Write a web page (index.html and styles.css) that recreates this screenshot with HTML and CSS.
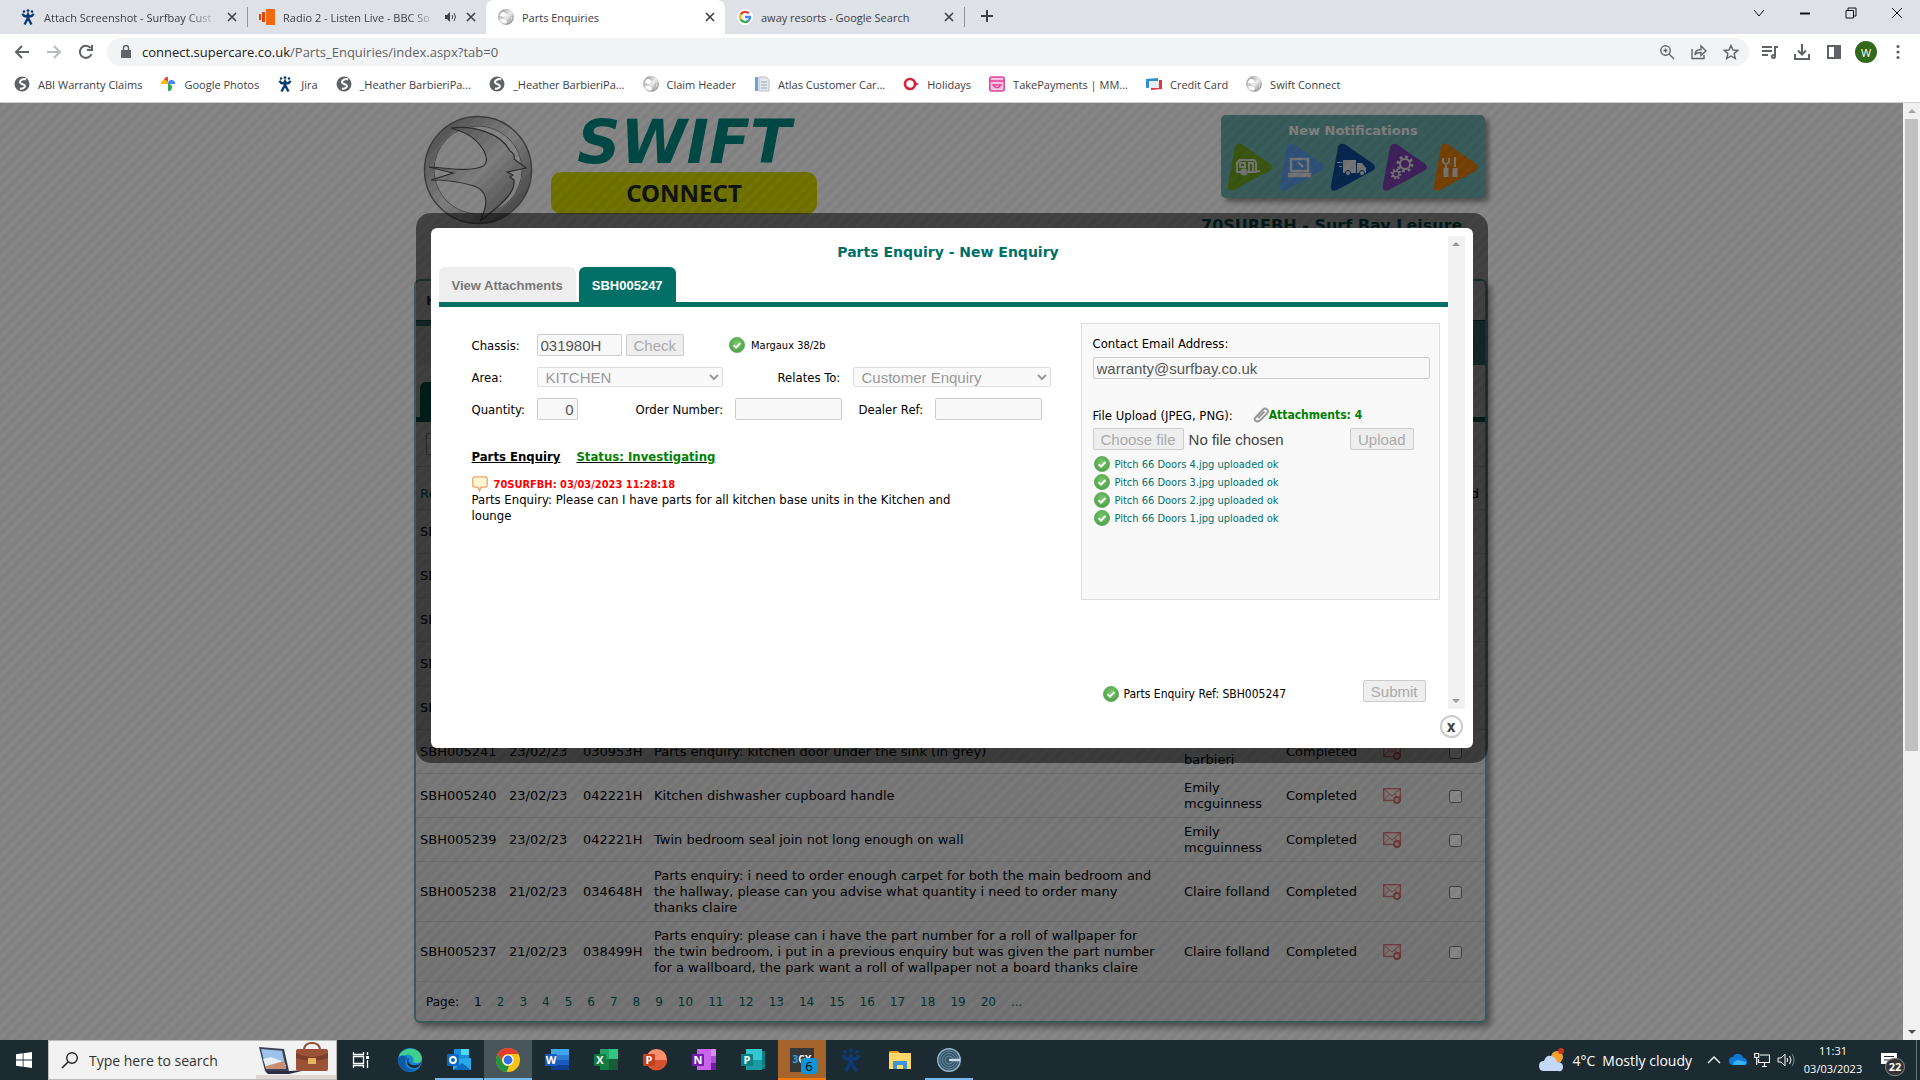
FILE: index.html
```html
<!DOCTYPE html>
<html lang="en">
<head>
  <meta charset="UTF-8" />
  <meta name="viewport" content="width=device-width, initial-scale=1" />
  <title>Parts Enquiries</title>
  <link rel="stylesheet" href="styles.css">
</head>
<body>

<!-- shared symbols -->
<svg class="defs" width="0" height="0">
  <defs>
    <linearGradient id="silver" x1="0" y1="0" x2="1" y2="1">
      <stop offset="0" stop-color="#8e8e8e" /><stop offset=".5" stop-color="#f2f2f2" /><stop offset="1" stop-color="#777" />
    </linearGradient>
    <radialGradient id="green" cx=".5" cy=".4" r=".6">
      <stop offset="0" stop-color="#7cc96e" /><stop offset="1" stop-color="#4ba046" />
    </radialGradient>
    <symbol id="tick" viewBox="0 0 16 16">
      <circle cx="8" cy="8" r="7.6" fill="url(#green)" stroke="#5fa85a" stroke-width=".8" />
      <path d="M4.6 8.2l2.4 2.4 4.4-4.6" fill="none" stroke="#fff" stroke-width="2" />
    </symbol>
    <symbol id="swift" viewBox="0 0 110 110">
      <circle cx="55" cy="55" r="49" fill="none" stroke="url(#silver)" stroke-width="9" />
      <circle cx="55" cy="55" r="53.5" fill="none" stroke="#777" stroke-width="1.5" />
      <circle cx="55" cy="55" r="44" fill="none" stroke="#888" stroke-width="1" />
      <path d="M28 13C50 10 78 18 87 36c4 2 5 6 4 8l12 9-19 4 6 3-3 2 4 3c2 14-17 28-34 41 9-18 8-30-6-35-13-4-28-6-43-6l22-7-24-6c20 1 38 5 52 0 6-2 7-8 3-16C54 24 45 18 28 13z" fill="url(#silver)" stroke="#555" stroke-width="1.2" />
    </symbol>
    <symbol id="globe" viewBox="0 0 16 16">
      <circle cx="8" cy="8" r="7.5" fill="#5f6368" />
      <path d="M12 3.500C10 2.500 6 3.500 6 6s5 2 5 4-3 3-5 2.500" fill="none" stroke="#fff" stroke-width="2" />
    </symbol>
    <symbol id="jira" viewBox="0 0 16 16">
      <g fill="#0c3a73"><circle cx="4" cy="2.5" r="1.3" /><circle cx="8" cy="1.6" r="1.4" /><circle cx="12" cy="2.5" r="1.3" /></g>
      <path d="M2.5 4.8C4 8 7 8 8 5.500c1 2.500 4 2.500 5.500-.7M7.500 8l4 7.500M8.500 8l-4 7.500" fill="none" stroke="#0c3a73" stroke-width="2.400" />
    </symbol>
    <symbol id="mail" viewBox="0 0 18 16">
      <rect x=".7" y=".7" width="16.600" height="11.800" fill="#f7dada" stroke="#c43c44" stroke-width="1.400" />
      <path d="M1 1l8 7 8-7M1 12l5-6M17 12l-5-6" fill="none" stroke="#c43c44" />
      <circle cx="14" cy="12" r="3" fill="#f4c8c8" stroke="#b5252e" stroke-width="1.800" />
    </symbol>
    <symbol id="cross" viewBox="0 0 12 12"><path d="M2 2l8 8M10 2l-8 8" fill="none" stroke="#3c4043" stroke-width="1.600" /></symbol>
  </defs>
</svg>

<header class="browser">
  <div class="tab-strip">
    <div class="tab">
      <svg class="ico"><use href="#jira" /></svg>
      <span class="tab-title fade">Attach Screenshot - Surfbay Cust</span>
      <svg class="close"><use href="#cross" /></svg>
    </div>
    <div class="tab divided">
      <svg class="ico" viewBox="0 0 16 16"><path d="M0 5h2v6H0zM3 3h3v10H3z" fill="#e0450c" /><path d="M7 0h9v16H7z" fill="#f26a10" /></svg>
      <span class="tab-title fade">Radio 2 - Listen Live - BBC So</span>
      <svg class="close" viewBox="0 0 12 12"><path d="M0 4h2l3-3v10L2 8H0z" fill="#3c4043" /><path d="M7 4q1.500 2 0 4M9 2q3 4 0 8" fill="none" stroke="#3c4043" /></svg>
      <svg class="close"><use href="#cross" /></svg>
    </div>
    <div class="tab active">
      <svg class="ico"><use href="#swift" /></svg>
      <span class="tab-title">Parts Enquiries</span>
      <svg class="close"><use href="#cross" /></svg>
    </div>
    <div class="tab">
      <svg class="ico" viewBox="0 0 16 16"><circle cx="8" cy="8" r="8" fill="#fff" /><g fill="none" stroke-width="2.400"><path d="M11.800 4.400A5 5 0 0 0 3.700 5.600" stroke="#ea4335" /><path d="M3.700 5.600a5 5 0 0 0 0 4.800" stroke="#fbbc05" /><path d="M3.700 10.400a5 5 0 0 0 7.800 1.200" stroke="#34a853" /><path d="M11.500 11.600A5 5 0 0 0 13 8H8" stroke="#4285f4" /></g></svg>
      <span class="tab-title">away resorts - Google Search</span>
      <svg class="close"><use href="#cross" /></svg>
    </div>
    <button class="new-tab" aria-label="New tab"><svg width="14" height="14" viewBox="0 0 14 14"><path d="M7 1v12M1 7h12" stroke="#3c4043" stroke-width="2" /></svg></button>
    <div class="window-controls">
      <button aria-label="Search tabs"><svg width="12" height="12" viewBox="0 0 12 12"><path d="M1 3l5 6 5-6" /></svg></button>
      <button aria-label="Minimise"><svg width="12" height="12" viewBox="0 0 12 12"><path d="M1 6.500h10" stroke-width="2" /></svg></button>
      <button aria-label="Restore"><svg width="12" height="12" viewBox="0 0 12 12"><path d="M1 3.500h7.500V11H1zM3 3V1h8v8H9" /></svg></button>
      <button aria-label="Close"><svg width="12" height="12" viewBox="0 0 12 12"><path d="M1 1l10 10M11 1L1 11" /></svg></button>
    </div>
  </div>

  <div class="toolbar">
    <button aria-label="Back"><svg width="16" height="16" viewBox="0 0 16 16"><path d="M15 8H2M8 2L2 8l6 6" /></svg></button>
    <button aria-label="Forward" class="off"><svg width="16" height="16" viewBox="0 0 16 16"><path d="M1 8h13M8 2l6 6-6 6" /></svg></button>
    <button aria-label="Reload"><svg width="16" height="16" viewBox="0 0 16 16"><path d="M13.500 10A6 6 0 1 1 12.500 4M14 1v5H9" /></svg></button>
    <div class="address">
      <svg width="12" height="14" viewBox="0 0 12 14"><path d="M1 5h10v8H1z" fill="#5f6368" /><path d="M3.500 5V3a2.500 2.500 0 0 1 5 0v2" fill="none" stroke="#5f6368" stroke-width="1.500" /></svg>
      <span class="url"><b>connect.supercare.co.uk</b>/Parts_Enquiries/index.aspx?tab=0</span>
      <button aria-label="Zoom"><svg width="16" height="16" viewBox="0 0 16 16"><circle cx="6.500" cy="6.500" r="4.700" /><path d="M10 10l5 5M6.500 4.500v4M4.500 6.500h4" /></svg></button>
      <button aria-label="Share"><svg width="16" height="16" viewBox="0 0 16 16"><path d="M1 5v9.500h12V11M4 11c0-4 3-5.500 6-5.500V2l5 5-5 4.500V8.500C7 8.500 5 9 4 11z" /></svg></button>
      <button aria-label="Bookmark"><svg width="16" height="16" viewBox="0 0 16 16"><path d="M8 1.500l2 4.500 4.800.4-3.700 3.200 1.200 4.900L8 12l-4.300 2.500 1.200-4.900L1.200 6.400 6 6z" /></svg></button>
    </div>
    <button aria-label="Media"><svg width="16" height="16" viewBox="0 0 16 16"><path d="M0 3h10M0 7h10M0 11h6M13 12V3h3" /><circle cx="11.500" cy="12.500" r="1.500" /></svg></button>
    <button aria-label="Downloads"><svg width="16" height="16" viewBox="0 0 16 16"><path d="M8 0v10M4 6.500l4 4 4-4M1 10v5h14v-5" /></svg></button>
    <button aria-label="Side panel"><svg width="16" height="16" viewBox="0 0 16 16"><path d="M2 2h12v12H2z" /><path d="M9 2h5v12H9z" fill="#5f6368" /></svg></button>
    <button aria-label="Profile" class="avatar">W</button>
    <button aria-label="Menu"><svg width="16" height="16" viewBox="0 0 16 16"><g fill="#5f6368" stroke="none"><circle cx="8" cy="2.500" r="1.600" /><circle cx="8" cy="8" r="1.600" /><circle cx="8" cy="13.500" r="1.600" /></g></svg></button>
  </div>

  <nav class="bookmarks">
    <a href="#"><svg class="ico"><use href="#globe" /></svg>ABI Warranty Claims</a>
    <a href="#"><svg class="ico" viewBox="0 0 16 16"><path d="M8 8V1a3.500 3.500 0 0 0-1 7z" fill="#ea4335" /><path d="M8 8h7a3.500 3.500 0 0 0-7-1z" fill="#4285f4" /><path d="M8 8v7a3.500 3.500 0 0 0 1-7z" fill="#34a853" /><path d="M8 8H1a3.500 3.500 0 0 1 7-1z" fill="#fbbc04" /></svg>Google Photos</a>
    <a href="#"><svg class="ico"><use href="#jira" /></svg>Jira</a>
    <a href="#"><svg class="ico"><use href="#globe" /></svg>_Heather BarbieriPa...</a>
    <a href="#"><svg class="ico"><use href="#globe" /></svg>_Heather BarbieriPa...</a>
    <a href="#"><svg class="ico"><use href="#swift" /></svg>Claim Header</a>
    <a href="#"><svg class="ico" viewBox="0 0 16 16"><path d="M1 1h3v14H1z" fill="#6aa3d0" /><path d="M5 1h7l3 3v11H5z" fill="#e4e9ed" stroke="#b4bcc4" /><path d="M7 6h6M7 9h6M7 12h6" stroke="#9aa6b0" /></svg>Atlas Customer Car...</a>
    <a href="#"><svg class="ico" viewBox="0 0 16 16"><circle cx="7" cy="8" r="5" fill="none" stroke="#d0253c" stroke-width="2.600" /><path d="M12 6l4 2-4 2z" fill="#d0253c" /></svg>Holidays</a>
    <a href="#"><svg class="ico" viewBox="0 0 16 16"><rect x=".8" y="1" width="14.400" height="14" rx="2" fill="#f9c4e2" stroke="#e0409a" stroke-width="1.500" /><path d="M1 5h14M4 9q4 5 8 0z" fill="#fff" stroke="#e0409a" stroke-width="1.400" /></svg>TakePayments | MM...</a>
    <a href="#"><svg class="ico" viewBox="0 0 16 16"><path d="M0 3l12-1v9L0 12z" fill="#2f8fd0" /><path d="M3 5h10v7H3z" fill="#e8eef4" /><path d="M13 4h3v9L5 14v-2h8z" fill="#e0383c" /></svg>Credit Card</a>
    <a href="#"><svg class="ico"><use href="#swift" /></svg>Swift Connect</a>
  </nav>
</header>

<main class="viewport">
  <div class="page">
    <div class="site">
      <div class="site-header">
        <svg class="badge"><use href="#swift" /></svg>
        <div class="brand">
          <div class="brand-name">SWIFT</div>
          <div class="brand-sub">CONNECT</div>
        </div>
        <div class="account">
          <div class="notifications">
            <h3>New Notifications</h3>
            <div class="arrows">
              <svg viewBox="0 0 48 50"><path d="M9 4c1-4 5-4 8-2l26 18c4 3 4 6 0 8L8 47c-4 2-7 0-6-5z" fill="#6ea51f" /><g fill="none" stroke="#ddd" stroke-width="2"><path d="M11 28V21q0-4 5-4h11q3 0 3 4v8H11zM14 20h5v4h-5zM23 29v-9h4v9M30 28h4" /><circle cx="18" cy="29" r="2.500" fill="#ddd" /></g></svg>
              <svg viewBox="0 0 48 50"><path d="M9 4c1-4 5-4 8-2l26 18c4 3 4 6 0 8L8 47c-4 2-7 0-6-5z" fill="#5b9be6" /><path d="M13 16h17v12H13zM11 31h21v2H11zM20 19l5 5" fill="none" stroke="#ddd" stroke-width="2.400" /></svg>
              <svg viewBox="0 0 48 50"><path d="M9 4c1-4 5-4 8-2l26 18c4 3 4 6 0 8L8 47c-4 2-7 0-6-5z" fill="#0b4a94" /><path d="M14 17h13v13H14zM28 20h5l4 5v5h-9zM8 19h5v1H8zM10 23h3v1h-3z" fill="#ddd" /><g fill="#ddd" stroke="#0b4a94"><circle cx="19" cy="30" r="2.500" /><circle cx="33" cy="30" r="2.500" /></g></svg>
              <svg viewBox="0 0 48 50"><path d="M9 4c1-4 5-4 8-2l26 18c4 3 4 6 0 8L8 47c-4 2-7 0-6-5z" fill="#7a3fae" /><g fill="none" stroke="#ddd"><circle cx="24" cy="21" r="5" stroke-width="2" /><circle cx="24" cy="21" r="7" stroke-width="3" stroke-dasharray="2.700 2.800" /><circle cx="15" cy="31" r="3" stroke-width="1.500" /><circle cx="15" cy="31" r="4.500" stroke-width="2" stroke-dasharray="1.800 1.700" /></g></svg>
              <svg viewBox="0 0 48 50"><path d="M9 4c1-4 5-4 8-2l26 18c4 3 4 6 0 8L8 47c-4 2-7 0-6-5z" fill="#e07b05" /><g stroke="#ddd" fill="none"><path d="M11 15v4q3 4 6 0v-4M14 21v4M23 14v10" stroke-width="2" /><path d="M14 25v9M23 25v9" stroke-width="5" /></g></svg>
            </div>
          </div>
          <h2>70SURFBH - Surf Bay Leisure</h2>
        </div>
      </div>

      <div class="panel">
        <div class="menu"><a href="#">Home</a></div>
        <div class="band"></div>
        <div class="sub-tabs"><span class="sub-tab"></span></div>
        <div class="filter"><input type="text" aria-label="Filter" /></div>
        <table class="enquiries">
          <colgroup><col class="c-ref"><col class="c-date"><col class="c-chassis"><col><col class="c-name"><col class="c-status"><col class="c-mail"><col class="c-check"></colgroup>
          <thead>
            <tr><th><a href="#">Ref</a></th><th></th><th></th><th></th><th></th><th></th><th colspan="2" class="end">Selected</th></tr>
          </thead>
          <tbody>
            <tr><td>SBH005246</td><td></td><td></td><td></td><td></td><td></td><td></td><td></td></tr>
            <tr><td>SBH005245</td><td></td><td></td><td></td><td></td><td></td><td></td><td></td></tr>
            <tr><td>SBH005244</td><td></td><td></td><td></td><td></td><td></td><td></td><td></td></tr>
            <tr><td>SBH005243</td><td></td><td></td><td></td><td></td><td></td><td></td><td></td></tr>
            <tr><td>SBH005242</td><td></td><td></td><td></td><td></td><td></td><td></td><td></td></tr>
            <tr><td>SBH005241</td><td>23/02/23</td><td>030953H</td><td class="desc">Parts enquiry: kitchen door under the sink (in grey)</td><td>Heather barbieri</td><td>Completed</td><td><svg class="mail"><use href="#mail" /></svg></td><td><input type="checkbox" aria-label="Select SBH005241"></td></tr>
            <tr><td>SBH005240</td><td>23/02/23</td><td>042221H</td><td class="desc">Kitchen dishwasher cupboard handle</td><td>Emily mcguinness</td><td>Completed</td><td><svg class="mail"><use href="#mail" /></svg></td><td><input type="checkbox" aria-label="Select SBH005240"></td></tr>
            <tr><td>SBH005239</td><td>23/02/23</td><td>042221H</td><td class="desc">Twin bedroom seal join not long enough on wall</td><td>Emily mcguinness</td><td>Completed</td><td><svg class="mail"><use href="#mail" /></svg></td><td><input type="checkbox" aria-label="Select SBH005239"></td></tr>
            <tr><td>SBH005238</td><td>21/02/23</td><td>034648H</td><td class="desc">Parts enquiry: i need to order enough carpet for both the main bedroom and the hallway, please can you advise what quantity i need to order many thanks claire</td><td>Claire folland</td><td>Completed</td><td><svg class="mail"><use href="#mail" /></svg></td><td><input type="checkbox" aria-label="Select SBH005238"></td></tr>
            <tr><td>SBH005237</td><td>21/02/23</td><td>038499H</td><td class="desc">Parts enquiry: please can i have the part number for a roll of wallpaper for the twin bedroom, i put in a previous enquiry but was given the part number for a wallboard, the park want a roll of wallpaper not a board thanks claire</td><td>Claire folland</td><td>Completed</td><td><svg class="mail"><use href="#mail" /></svg></td><td><input type="checkbox" aria-label="Select SBH005237"></td></tr>
          </tbody>
        </table>
        <div class="pager">
          <span>Page:</span><span>1</span>
          <a href="#">2</a><a href="#">3</a><a href="#">4</a><a href="#">5</a><a href="#">6</a><a href="#">7</a><a href="#">8</a><a href="#">9</a><a href="#">10</a><a href="#">11</a><a href="#">12</a><a href="#">13</a><a href="#">14</a><a href="#">15</a><a href="#">16</a><a href="#">17</a><a href="#">18</a><a href="#">19</a><a href="#">20</a><a href="#">...</a>
        </div>
      </div>

      <div class="lower"><div></div><div></div><div></div></div>
    </div>

    <div class="overlay">
      <div class="modal">
        <div class="modal-body">
          <div class="modal-scroll">
            <div class="modal-content">
              <h1>Parts Enquiry - New Enquiry</h1>
              <div class="modal-tabs">
                <a href="#">View Attachments</a>
                <a href="#" class="current">SBH005247</a>
              </div>
              <div class="modal-cols">
                <form class="details">
                  <div class="row">
                    <label for="chassis">Chassis:</label>
                    <input type="text" id="chassis" class="w-chassis" value="031980H" readonly />
                    <button type="button" class="btn check" disabled>Check</button>
                    <span class="note model"><svg class="ico"><use href="#tick" /></svg>Margaux 38/2b</span>
                  </div>
                  <div class="row">
                    <label for="area">Area:</label>
                    <select id="area" class="w-area" disabled><option>KITCHEN</option></select>
                    <label for="relates" class="l-relates">Relates To:</label>
                    <select id="relates" class="w-relates" disabled><option>Customer Enquiry</option></select>
                  </div>
                  <div class="row">
                    <label for="qty">Quantity:</label>
                    <input type="text" id="qty" class="w-qty" value="0" readonly />
                    <label for="order" class="l-order">Order Number:</label>
                    <input type="text" id="order" class="w-order" readonly />
                    <label for="dealer" class="l-dealer">Dealer Ref:</label>
                    <input type="text" id="dealer" class="w-order" readonly />
                  </div>
                  <div class="headings"><span>Parts Enquiry</span><span class="status">Status: Investigating</span></div>
                  <div class="comment-head">
                    <svg class="ico" viewBox="0 0 16 16"><path d="M3 .8h10q2.200 0 2.200 2.200v6q0 2.200-2.200 2.200H9L7.500 15 6 11.200H3Q.8 11.200.8 9V3Q.8.8 3 .8z" fill="#fff6d2" stroke="#eda56e" stroke-width="1.300" /></svg>
                    70SURFBH: 03/03/2023 11:28:18
                  </div>
                  <p class="comment">Parts Enquiry: Please can I have parts for all kitchen base units in the Kitchen and lounge</p>
                </form>

                <div class="side">
                  <div class="upload-box">
                    <label for="email">Contact Email Address:</label>
                    <input type="text" id="email" value="warranty@surfbay.co.uk" readonly />
                    <div class="upload-head">
                      <span>File Upload (JPEG, PNG):</span>
                      <span class="attachments"><svg class="ico" viewBox="0 0 16 16"><path d="M2 11L10 2.500q2-2 4 0t0 4L7 13.500q-2 1.500-4 .5t-1-3.500M5 11l6.500-6.500" fill="none" stroke="#999" stroke-width="2" /></svg>Attachments: 4</span>
                    </div>
                    <div class="upload-row">
                      <button class="btn" disabled>Choose file</button>
                      <span class="chosen">No file chosen</span>
                      <button class="btn upload" disabled>Upload</button>
                    </div>
                    <ul class="files">
                      <li><svg class="ico"><use href="#tick" /></svg>Pitch 66 Doors 4.jpg uploaded ok</li>
                      <li><svg class="ico"><use href="#tick" /></svg>Pitch 66 Doors 3.jpg uploaded ok</li>
                      <li><svg class="ico"><use href="#tick" /></svg>Pitch 66 Doors 2.jpg uploaded ok</li>
                      <li><svg class="ico"><use href="#tick" /></svg>Pitch 66 Doors 1.jpg uploaded ok</li>
                    </ul>
                  </div>
                  <div class="submit-row">
                    <span class="note"><svg class="ico"><use href="#tick" /></svg>Parts Enquiry Ref: SBH005247</span>
                    <button class="btn" disabled>Submit</button>
                  </div>
                </div>
              </div>
            </div>
            <div class="mini-bar"><i class="up"></i><i class="down"></i></div>
          </div>
          <button class="modal-close" aria-label="Close">x</button>
        </div>
      </div>
    </div>
  </div>
  <div class="scrollbar"><i class="up"></i><span class="thumb"></span><i class="down"></i></div>
</main>

<footer class="taskbar">
  <button class="start" aria-label="Start"><svg width="16" height="16" viewBox="0 0 16 16"><path d="M0 2.300L6.700 1.300v6.300H0zM7.500 1.200L16 0v7.600H7.500zM0 8.400h6.700v6.300L0 13.700zM7.500 8.400H16V16l-8.500-1.200z" fill="#fff" /></svg></button>
  <div class="search">
    <svg width="18" height="18" viewBox="0 0 18 18"><circle cx="11" cy="7" r="5.300" fill="none" stroke="#222" stroke-width="1.400" /><path d="M7 11l-6 6" stroke="#222" stroke-width="1.600" /></svg>
    <input type="text" placeholder="Type here to search" aria-label="Search" />
    <svg width="80" height="38" viewBox="0 0 80 38"><path d="M0 34h80v4H0z" fill="#ddd6d2" /><path d="M3 6l25 2 5 22H9z" fill="#3b3f56" /><path d="M5 8l21 1.700 4 18.300H10z" fill="#9ec3ea" /><path d="M7 18l8-2 13 5 2 4-20 1z" fill="#e8eef5" /><path d="M10 25l18-5 2 8H10z" fill="#c98e76" /><path d="M9 30h24l17-1-17 4H12z" fill="#2d3044" /><path d="M48 8q1-6 8-6t8 6" fill="none" stroke="#8a4b32" stroke-width="2" /><rect x="40" y="8" width="32" height="22" rx="2" fill="#9a5238" /><path d="M40 12q16 8 32 0v5q-16 5-32 0z" fill="#7d3d28" /><rect x="52" y="17" width="8" height="6" fill="#e8b45c" /></svg>
  </div>
  <div class="apps">
    <button aria-label="Task view"><svg viewBox="0 0 24 24"><g fill="none" stroke="#fff" stroke-width="1.300"><path d="M4.500 8.500h10v7h-10zM4.500 4v2.500h10V4M4.500 20v-2.500h10V20M18.500 4v3M18.500 12v8" /></g><path d="M17 8h3v3h-3z" fill="#fff" /></svg></button>
    <button aria-label="Edge"><svg viewBox="0 0 24 24"><circle cx="12" cy="12" r="12" fill="#1787d6" /><path d="M1 8C5-2 22-2 24 10c0 5-6 6-9 4 2-5-3-8-7-7s-6 2-7 1z" fill="#3fd08c" /><path d="M9 10c-4 4 0 14 10 11-8 6-19 0-19-9 1-5 6-6 9-2z" fill="#0c59a4" /><path d="M11 10q-2 3 1 6 5 3 11-1-2 5-7 5-7-1-7-7 0-3 2-3z" fill="#1b2b31" /></svg></button>
    <button aria-label="Outlook" class="running"><svg viewBox="0 0 24 24"><path d="M7 1h15v12H7z" fill="#1490df" /><path d="M14 1h8v6h-8z" fill="#50d9ff" /><path d="M6 11l18-1v12H6z" fill="#28a8ea" /><path d="M6 22l9-7 9 7z" fill="#0f6cbd" /><rect y="6" width="12" height="12" rx="1" fill="#0b68c4" /><circle cx="6" cy="12" r="3" fill="none" stroke="#fff" stroke-width="1.800" /></svg></button>
    <button aria-label="Chrome" class="running front"><svg viewBox="0 0 24 24"><circle cx="12" cy="12" r="12" fill="#fbc116" /><path d="M1.600 6A12 12 0 0 1 22.400 6H12a6 6 0 0 0-5.200 9z" fill="#e33b2e" /><path d="M1.600 6l5.200 9a6 6 0 0 0 6.200 3l-2.500 6A12 12 0 0 1 1.600 6z" fill="#229342" /><circle cx="12" cy="12" r="5.600" fill="#fff" /><circle cx="12" cy="12" r="4.400" fill="#2f6fe4" /></svg></button>
    <button aria-label="Word"><svg viewBox="0 0 24 24"><path d="M6 1h18v6H6z" fill="#41a5ee" /><path d="M6 7h18v5H6z" fill="#2b7cd3" /><path d="M6 12h18v5H6z" fill="#185abd" /><path d="M6 17h18v5H6z" fill="#103f91" /><rect y="6" width="12" height="12" rx="1" fill="#185abd" /><text x="6" y="16">W</text></svg></button>
    <button aria-label="Excel"><svg viewBox="0 0 24 24"><path d="M6 1h9v10H6z" fill="#21a366" /><path d="M15 1h9v10h-9z" fill="#33c481" /><path d="M6 11h9v11H6z" fill="#107c41" /><path d="M15 11h9v11h-9z" fill="#185c37" /><rect y="6" width="12" height="12" rx="1" fill="#107c41" /><text x="6" y="16">X</text></svg></button>
    <button aria-label="PowerPoint"><svg viewBox="0 0 24 24"><circle cx="13.500" cy="11.500" r="10.500" fill="#ff8f6b" /><path d="M3 12h21a10.500 10.500 0 0 1-21 0z" fill="#d35230" /><rect y="6" width="12" height="12" rx="1" fill="#c43e1c" /><text x="6" y="16">P</text></svg></button>
    <button aria-label="OneNote"><svg viewBox="0 0 24 24"><path d="M5 1h14v21H5z" fill="#ca64ea" /><path d="M19 1h5v7h-5z" fill="#d88cf0" /><path d="M19 8h5v7h-5z" fill="#ae4bd5" /><path d="M19 15h5v7h-5z" fill="#7719aa" /><rect y="6" width="12" height="12" rx="1" fill="#7719aa" /><text x="6" y="16">N</text></svg></button>
    <button aria-label="Publisher"><svg viewBox="0 0 24 24"><path d="M20 3h4v18h-4z" fill="#038387" /><path d="M5 1h16v11H5z" fill="#37c6d0" /><path d="M5 12h16v10H5z" fill="#1a9ba1" /><rect y="6" width="12" height="12" rx="1" fill="#038387" /><text x="6" y="16">P</text></svg></button>
    <button aria-label="3CX" class="alert"><svg viewBox="0 0 24 24"><path d="M0 0h24v24H0z" fill="#373737" /><text x="12" y="15" class="tcx"><tspan fill="#2ea3dc">3</tspan>CX</text></svg><span class="count">6</span></button>
    <button aria-label="Jira"><svg viewBox="0 0 16 16"><use href="#jira" /></svg></button>
    <button aria-label="File Explorer"><svg viewBox="0 0 24 24"><path d="M1 4q0-1 1-1h8l2 2H1z" fill="#e0a010" /><path d="M1 5h22v16H1z" fill="#ffd76a" /><path d="M5 21v-7q0-1 1-1h12q1 0 1 1v7h-4v-4H9v4z" fill="#3f95dc" /></svg></button>
    <button aria-label="G" class="running"><svg viewBox="0 0 24 24"><circle cx="12" cy="12" r="11.300" fill="#3a5566" stroke="#8fb8cf" stroke-width="1.400" /><g fill="none" stroke="#6d94aa" stroke-width=".8"><circle cx="12" cy="12" r="9" /><circle cx="12" cy="12" r="6.500" /><circle cx="12" cy="12" r="4" /></g><path d="M12 12h11" stroke="#c7dbe7" stroke-width="2.400" /></svg></button>
  </div>
  <div class="tray">
    <svg width="26" height="24" viewBox="0 0 26 24"><circle cx="18" cy="9" r="6" fill="#f6a12c" /><circle cx="22" cy="3" r="3" fill="#d0341f" /><path d="M5 23q-5 0-5-5t5-5q2-6 7-5t6 6q6 0 6 5t-5 4z" fill="#c5d9f7" /></svg>
    <span class="weather">4°C</span><span class="weather">Mostly cloudy</span>
    <svg class="t-chev" width="14" height="14" viewBox="0 0 14 14"><path d="M1 10l6-6 6 6" fill="none" stroke="#fff" stroke-width="1.400" /></svg>
    <svg width="18" height="14" viewBox="0 0 18 14"><path d="M4 12q-4 0-4-4t4-4q2-4 6-3t4 4q4 0 4 4t-3 3z" fill="#0f78d4" /><path d="M4 12q0-4 5-5l8 2q0 3-3 3z" fill="#38b2f4" /></svg>
    <svg width="16" height="16" viewBox="0 0 16 16"><path d="M6 3h9.500v7.500H4.500V7M8 14.500h5M10.500 11v3M.7 1.500h4v4h-4zM2.700 6v7" fill="none" stroke="#fff" stroke-width="1.100" /></svg>
    <svg width="18" height="16" viewBox="0 0 18 16"><path d="M1 6h3l4-4v12L4 10H1z" fill="none" stroke="#fff" /><path d="M10 6q1.500 2 0 4M12.500 4q3 4 0 8" fill="none" stroke="#fff" /><path d="M15 2q4 6 0 12" fill="none" stroke="#789" /></svg>
    <div class="clock"><span>11:31</span><span>03/03/2023</span></div>
    <div class="notif">
      <svg width="16" height="16" viewBox="0 0 16 16"><path d="M0 1h16v11h-6l-3 3v-3H0z" fill="#fff" /><path d="M3 4.500h10M3 8h10" stroke="#1b2b31" /></svg>
      <span class="notif-count">22</span>
    </div>
  </div>
</footer>

</body>
</html>
```

FILE: styles.css
```css
* {
  box-sizing: border-box;
}

body {
  margin: 0;
  height: 100vh;
  display: flex;
  flex-direction: column;
  overflow: hidden;
  font-family: "DejaVu Sans", sans-serif;
  font-size: 13px;
}

.defs {
  position: absolute;
}

button {
  border: none;
  background: none;
  padding: 0;
  font: inherit;
}

a {
  text-decoration: none;
  color: inherit;
}

h1, h2, h3, p, ul {
  margin: 0;
  padding: 0;
}

.ico {
  width: 16px;
  height: 16px;
  flex: none;
}

/* ---------- browser ---------- */
.browser {
  background: #fff;
  border-bottom: 1px solid #d0d0d0;
  font-family: "Open Sans", sans-serif;
  color: #3c4043;
  font-size: 11px;
}

.tab-strip {
  display: flex;
  background: #dee1e6;
  height: 34px;
  padding-left: 8px;
}

.tab {
  width: 239px;
  display: flex;
  align-items: center;
  gap: 8px;
  padding: 0 9px 0 12px;
  border-radius: 8px 8px 0 0;
}

.tab.divided {
  background: linear-gradient(#909499, #909499) 0 center / 1px 20px no-repeat;
}

.tab.active {
  background: #fff;
}

.tab-title {
  flex: 1;
  white-space: nowrap;
}

.tab-title.fade {
  -webkit-mask-image: linear-gradient(90deg, #000 82%, transparent);
  mask-image: linear-gradient(90deg, #000 82%, transparent);
}

.close {
  width: 12px;
  height: 12px;
  flex: none;
}

.new-tab {
  width: 46px;
  background: linear-gradient(#909499, #909499) 0 center / 1px 20px no-repeat;
}

.window-controls {
  margin-left: auto;
  display: flex;
}

.window-controls button {
  width: 46px;
  padding-bottom: 6px;
}

.window-controls svg {
  fill: none;
  stroke: #111;
}

.toolbar {
  display: flex;
  align-items: center;
  height: 36px;
  padding: 0 6px;
}

.toolbar button {
  width: 32px;
  height: 28px;
  display: flex;
  align-items: center;
  justify-content: center;
}

.toolbar button svg {
  fill: none;
  stroke: #5f6368;
  stroke-width: 2;
}

.toolbar button.off svg {
  stroke: #b9bcc0;
}

.address {
  flex: 1;
  height: 28px;
  margin: 0 5px;
  border-radius: 14px;
  background: #f1f3f4;
  display: flex;
  align-items: center;
  padding: 0 2px 0 13px;
}

.address button svg {
  stroke-width: 1.4;
}

.url {
  flex: 1;
  padding-left: 10px;
  font-size: 13px;
  color: #5f6368;
}

.url b {
  font-weight: normal;
  color: #202124;
}

.toolbar .avatar {
  width: 22px;
  height: 22px;
  margin: 0 5px;
  border-radius: 50%;
  background: #33691e;
  color: #fff;
  font-size: 11px;
}

.bookmarks {
  display: flex;
  align-items: center;
  height: 32px;
  padding: 0 14px 4px;
  gap: 18px;
}

.bookmarks a {
  display: flex;
  align-items: center;
  gap: 8px;
  white-space: nowrap;
}

/* ---------- page ---------- */
.viewport {
  flex: 1;
  min-height: 0;
  display: flex;
}

.page {
  flex: 1;
  position: relative;
  overflow: hidden;
  background: #fff;
}

.site {
  width: 1075px;
  margin: 0 auto;
  padding-right: 2px;
}

.site-header {
  display: flex;
  height: 176px;
  padding-top: 12px;
}

.badge {
  width: 110px;
  height: 110px;
  margin-left: 9px;
}

.brand {
  width: 266px;
  margin-left: 18px;
  text-align: center;
}

.brand-name {
  height: 57px;
  line-height: 54px;
  font-size: 60px;
  font-weight: bold;
  font-style: italic;
  color: #008a83;
}

.brand-sub {
  height: 42px;
  line-height: 42px;
  border-radius: 10px;
  background: #d5dc00;
  font-family: "Noto Sans", sans-serif;
  font-size: 24px;
  font-weight: bold;
  color: #222;
}

.account {
  margin-left: auto;
  width: 266px;
}

.notifications {
  width: 264px;
  height: 83px;
  padding-top: 8px;
  border-radius: 5px;
  background: #6cb0ae;
  box-shadow: 4px 4px 5px rgba(0, 0, 0, .4);
}

.notifications h3 {
  font-size: 13px;
  line-height: 16px;
  text-align: center;
  color: #f4f4f4;
}

.arrows {
  display: flex;
  justify-content: space-between;
  padding: 4px 5px;
}

.arrows svg {
  width: 48px;
  height: 50px;
}

.account h2 {
  margin: 18px 0 0 -20px;
  font-size: 16px;
  line-height: 20px;
  color: #00635c;
  white-space: nowrap;
}

.panel {
  border: 2px solid #6cb0ae;
  border-radius: 6px;
  background: linear-gradient(#f6f6f6, #dedede);
  box-shadow: 4px 4px 6px rgba(0, 0, 0, .4);
}

.menu {
  height: 40px;
  line-height: 40px;
  padding-left: 10px;
  border-bottom: 1px solid #00635c;
  color: #123c5c;
  font-weight: bold;
}

.band {
  height: 44px;
  background: linear-gradient(90deg, #e8e8e8 50%, #47908c 50%);
  border-top: 5px solid #47908c;
}

.sub-tabs {
  height: 57px;
  padding: 17px 4px 0;
  border-bottom: 5px solid #006f65;
}

.sub-tab {
  display: block;
  width: 200px;
  height: 35px;
  border-radius: 6px 6px 0 0;
  background: #006f65;
}

.filter {
  height: 45px;
  padding: 11px 10px;
  border-bottom: 1px solid #ccc;
}

.filter input {
  width: 160px;
  height: 22px;
  border: 1px solid #999;
  border-radius: 2px;
  background: #f8f8f8;
}

.enquiries {
  width: 100%;
  table-layout: fixed;
  border-collapse: separate;
  border-spacing: 0;
  line-height: 16px;
}

.enquiries th {
  height: 43px;
  padding: 12px 4px 0;
  text-align: left;
  font-weight: normal;
  border-bottom: 1px solid #cfcfcf;
}

.enquiries td {
  height: 44px;
  padding: 6px 4px 5px;
  border-bottom: 1px solid #cfcfcf;
}

.enquiries td.desc {
  padding-right: 20px;
}

.enquiries th a {
  color: #00635c;
}

.enquiries th.end {
  text-align: right;
  padding-right: 6px;
}

.c-ref { width: 89px; }
.c-date { width: 74px; }
.c-chassis { width: 71px; }
.c-name { width: 102px; }
.c-status { width: 97px; }
.c-mail { width: 66px; }
.c-check { width: 40px; }

.enquiries input {
  display: block;
  margin: 0;
}

.mail {
  display: block;
  width: 18px;
  height: 16px;
  opacity: .65;
}

.pager {
  display: flex;
  gap: 15px;
  padding: 12px 10px 11px;
  font-size: 12px;
  line-height: 16px;
}

.pager a {
  color: #00635c;
}

.lower {
  display: grid;
  grid-template-columns: 450fr 285fr 286fr;
  gap: 25px;
  margin-top: 17px;
}

.lower div {
  height: 60px;
  border-top: 2px solid #00635c;
  border-radius: 6px;
}

/* ---------- dimmed layer and dialog ---------- */
.overlay {
  position: absolute;
  inset: 0;
  padding-top: 110px;
  background: repeating-linear-gradient(135deg, rgba(0, 0, 0, .495) 0 3px, rgba(0, 0, 0, .47) 5px 6px, rgba(0, 0, 0, .495) 8px);
}

.modal {
  width: 1072px;
  margin: 0 auto;
  padding: 15px;
  border-radius: 15px;
  background: rgba(0, 0, 0, .5);
}

.modal-body {
  height: 520px;
  padding: 8px;
  border-radius: 6px;
  background: #fff;
  font-family: "DejaVu Sans Condensed", "DejaVu Sans", sans-serif;
  font-size: 13px;
  color: #000;
}

.modal-scroll {
  display: flex;
  height: 473px;
}

.modal-content {
  flex: 1;
}

.modal-content h1 {
  padding: 7px 0 0 10px;
  height: 31px;
  font-family: "DejaVu Sans", sans-serif;
  font-size: 14px;
  line-height: 18px;
  text-align: center;
  color: #006f65;
}

.modal-tabs {
  display: flex;
  gap: 3px;
  height: 40px;
  border-bottom: 5px solid #006f65;
  font-family: "Liberation Sans", Arial, sans-serif;
  font-size: 13px;
  font-weight: bold;
}

.modal-tabs a {
  padding: 0 13px;
  line-height: 37px;
  border-radius: 6px 6px 0 0;
  background: #eee;
  color: #777;
}

.modal-tabs a.current {
  background: #006f65;
  color: #fff;
}

.modal-cols {
  display: flex;
  justify-content: space-between;
  padding: 16px 8px 0 33px;
}

.details {
  padding-top: 6px;
}

.row {
  display: flex;
  align-items: center;
  height: 32px;
}

.row label {
  width: 65px;
  white-space: nowrap;
}

.modal input, .modal select, .btn, .chosen {
  font-family: "Liberation Sans", Arial, sans-serif;
  font-size: 15px;
}

.modal input {
  height: 22px;
  padding: 0 3px;
  border: 1px solid #ccc;
  border-radius: 2px;
  background: #f8f8f8;
  color: #555;
}

.modal select {
  height: 20px;
  padding-left: 4px;
  border: 1px solid #ddd;
  border-radius: 2px;
  background: #f9f9f9;
  color: #999;
  opacity: 1;
}

.modal .w-chassis { width: 85px; }
.modal .w-area { width: 186px; }
.modal .w-relates { width: 198px; }
.modal .w-qty { width: 41px; text-align: right; }
.modal .w-order { width: 107px; }

.row .l-relates {
  margin-left: 55px;
  width: 75px;
}

.row .l-order {
  margin-left: 58px;
  width: 99px;
}

.row .l-dealer {
  margin-left: 17px;
  width: 76px;
}

.btn {
  height: 22px;
  padding: 0 7px;
  border: 1px solid #ccc;
  border-radius: 2px;
  background: #eee;
  color: #aaa;
}

.check {
  margin-left: 4px;
}

.note {
  display: flex;
  align-items: center;
  gap: 5px;
  font-size: 12px;
}

.model {
  margin-left: 45px;
  gap: 6px;
  font-size: 11px;
}

.headings {
  display: flex;
  gap: 16px;
  margin-top: 24px;
  line-height: 16px;
  font-weight: bold;
  text-decoration: underline;
}

.status {
  color: #008000;
}

.comment-head {
  display: flex;
  align-items: center;
  gap: 6px;
  height: 16px;
  margin-top: 11px;
  font-size: 11px;
  font-weight: bold;
  color: #f00;
}

.comment {
  width: 500px;
  line-height: 16px;
}

.side {
  width: 359px;
}

.upload-box {
  height: 277px;
  padding: 12px 9px 0 11px;
  border: 1px solid #ddd;
  background: #f9f9f9;
}

.upload-box label {
  display: block;
  line-height: 16px;
  margin-bottom: 5px;
}

.upload-box input {
  display: block;
  width: 100%;
}

.upload-head {
  display: flex;
  align-items: center;
  gap: 20px;
  margin-top: 28px;
  height: 16px;
}

.attachments {
  display: flex;
  align-items: center;
  font-size: 12px;
  font-weight: bold;
  color: #008000;
}

.upload-row {
  display: flex;
  align-items: center;
  gap: 5px;
  margin-top: 5px;
}

.chosen {
  color: #444;
}

.upload {
  margin-left: auto;
  margin-right: 16px;
}

.files {
  list-style: none;
  margin-top: 5px;
  font-size: 11px;
  color: #00706b;
}

.files li {
  display: flex;
  align-items: center;
  gap: 5px;
  height: 18px;
  padding-left: 1px;
}

.submit-row {
  display: flex;
  justify-content: space-between;
  align-items: flex-end;
  margin-top: 80px;
  padding: 0 14px 0 22px;
}

.mini-bar, .scrollbar {
  width: 17px;
  background: #f1f1f1;
  display: flex;
  flex-direction: column;
  align-items: center;
  justify-content: space-between;
  padding: 6px 0;
}

.up, .down {
  border: 4px solid transparent;
}

.up {
  border-top: none;
  border-bottom-color: #999;
}

.down {
  border-bottom: none;
  border-top-color: #999;
}

.scrollbar .up {
  border-bottom-color: #a3a3a3;
}

.scrollbar .down {
  border-top-color: #505050;
}

.scrollbar .thumb {
  width: 13px;
  height: 632px;
  margin: 6px 0 auto;
  background: #c1c1c1;
}

.modal-close {
  display: block;
  margin: 6px 2px 0 auto;
  width: 23px;
  height: 23px;
  line-height: 16px;
  border: 2px solid #ccc;
  border-radius: 50%;
  font-size: 15px;
  font-weight: bold;
  color: #444;
}

/* ---------- taskbar ---------- */
.taskbar {
  display: flex;
  height: 40px;
  background: #1b2b31;
  color: #fff;
  font-family: "Open Sans", sans-serif;
}

.start {
  width: 48px;
  padding-top: 4px;
}

.search {
  width: 289px;
  display: flex;
  align-items: center;
  padding-left: 12px;
  border: 1px solid #bbb;
  background: #f2f2f2;
}

.search input {
  flex: 1;
  min-width: 0;
  margin-left: 8px;
  border: none;
  background: none;
  font-family: inherit;
  font-size: 14px;
}

.search input::placeholder {
  color: #333;
}

.apps {
  display: flex;
  gap: 1px;
}

.apps button {
  position: relative;
  width: 48px;
  border-bottom: 2px solid transparent;
  padding-top: 2px;
}

.apps svg {
  display: block;
  width: 24px;
  height: 24px;
  margin: 0 auto;
}

.apps text {
  fill: #fff;
  font-size: 11px;
  font-weight: bold;
  text-anchor: middle;
}

.apps .tcx {
  font-size: 10px;
}

.apps .running {
  border-bottom-color: #76b9ed;
}

.apps .front {
  background: #48565b;
}

.apps .alert {
  background: #a6642d;
  border-bottom-color: #ff7800;
}

.count {
  position: absolute;
  right: 9px;
  bottom: 4px;
  width: 16px;
  height: 16px;
  line-height: 16px;
  border-radius: 3px;
  background: #0c96d8;
  text-align: center;
}

.tray {
  margin-left: auto;
  display: flex;
  align-items: center;
  gap: 7px;
  padding-right: 3px;
}

.weather {
  font-size: 14px;
}

.t-chev {
  margin: 0 1px 0 8px;
}

.clock {
  display: flex;
  flex-direction: column;
  align-items: center;
  width: 62px;
  font-size: 11px;
  line-height: 18px;
}

.notif {
  position: relative;
  width: 46px;
  height: 40px;
  padding: 12px 0 0 10px;
  border-right: 1px solid #66757a;
}

.notif-count {
  position: absolute;
  left: 14px;
  top: 18px;
  width: 20px;
  height: 18px;
  line-height: 16px;
  border: 1px solid #888;
  border-radius: 9px;
  background: #333;
  font-size: 11px;
  font-weight: bold;
  text-align: center;
}
```
